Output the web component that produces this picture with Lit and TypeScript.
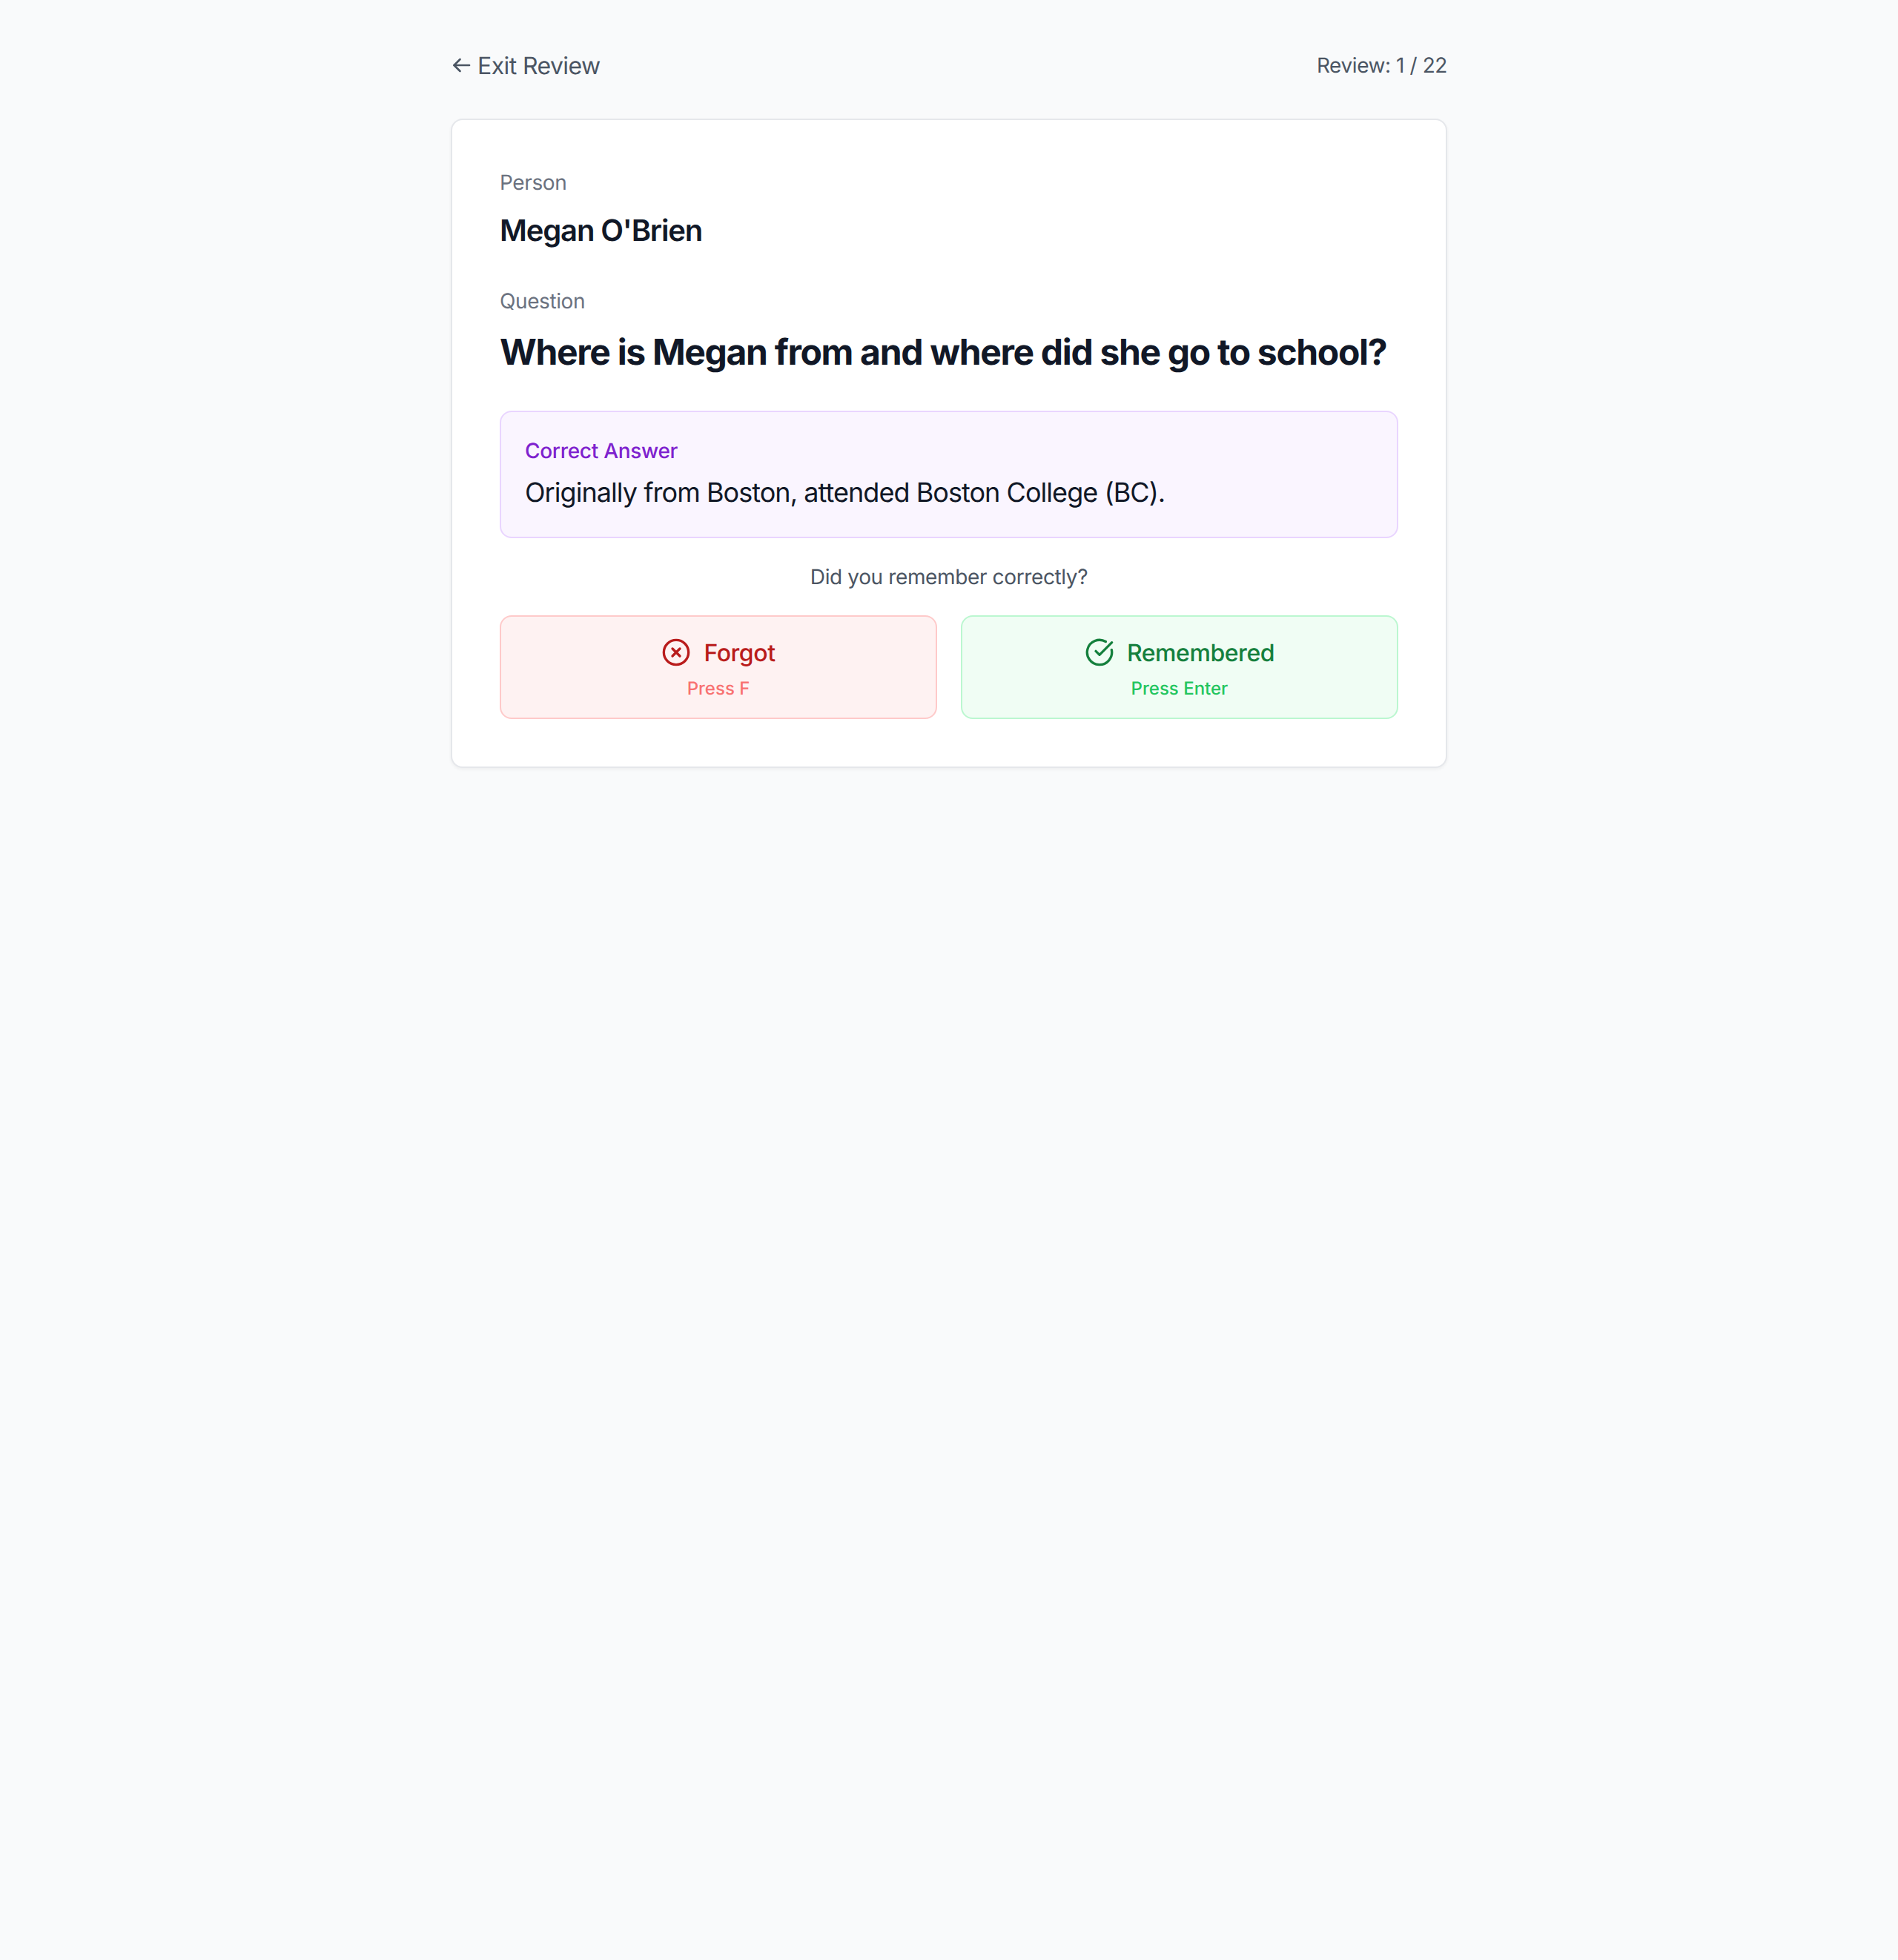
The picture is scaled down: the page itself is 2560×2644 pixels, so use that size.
import { LitElement, html, css } from "lit";
import { customElement } from "lit/decorators.js";

@customElement("app-root")
export class AppRoot extends LitElement {
  static styles = css`
    :host { display: block; min-height: 2644px; background: #f9fafb; font-family: Inter, "Liberation Sans", sans-serif; text-rendering: geometricPrecision; }
    .wrap { width: 1344px; margin: 0 auto; padding: 64px 0 0; }
    .top { display: flex; justify-content: space-between; align-items: center; margin-bottom: 48px; height: 48px; }
    .exit { display: flex; align-items: center; gap: 8px; color: #4b5563; font-size: 32px; line-height: 48px; letter-spacing: -0.6px; }
    .exit span { padding-top: 2px; }
    .exit svg { width: 28px; height: 28px; }
    .count { color: #4b5563; font-size: 28px; line-height: 40px; letter-spacing: -0.42px; }
    .card { box-sizing: border-box; background: #fff; border: 2px solid #e5e7eb; border-radius: 16px; padding: 64px; box-shadow: 0 2px 4px rgba(0,0,0,.05); }
    .label { color: #6b7280; font-size: 28px; line-height: 40px; letter-spacing: -0.4px; margin-bottom: 16px; }
    .person { color: #111827; font-size: 40px; line-height: 58px; font-weight: 600; letter-spacing: -1.15px; margin-bottom: 46px; }
    .q { color: #111827; font-size: 48px; line-height: 66px; font-weight: 700; letter-spacing: -1.33px; white-space: nowrap; }
    .answer { background: #faf5ff; border: 2px solid #e9d5ff; border-radius: 16px; padding: 32px; margin-top: 46px; }
    .answer .t { color: #7e22ce; font-size: 28px; line-height: 40px; font-weight: 500; letter-spacing: -0.3px; margin-bottom: 8px; }
    .answer .a { color: #111827; font-size: 36px; line-height: 56px; letter-spacing: -0.95px; }
    .ask { text-align: center; color: #4b5563; font-size: 28px; line-height: 40px; letter-spacing: -0.37px; margin: 32px 0; }
    .btns { display: grid; grid-template-columns: 1fr 1fr; gap: 32px; }
    .btn { border-radius: 16px; padding: 24px 32px 22px; display: flex; flex-direction: column; align-items: center; gap: 6px; border: 2px solid; }
    .main { display: flex; align-items: flex-start; gap: 17px; font-size: 32px; line-height: 50px; font-weight: 500; letter-spacing: -0.45px; }
    .main svg { width: 40px; height: 40px; margin-top: 4px; }
    .sub { font-size: 24px; line-height: 34px; font-weight: 500; }
    .f { background: #fef2f2; border-color: #fecaca; }
    .f .main { color: #b91c1c; } .f .sub { color: #f87171; }
    .r { background: #f0fdf4; border-color: #bbf7d0; }
    .r .main { color: #15803d; } .r .sub { color: #22c55e; }
  `;
  render() {
    return html`<div class="wrap">
      <div class="top">
        <div class="exit"><svg viewBox="0 0 28 28" fill="none" stroke="currentColor" stroke-width="2.7" stroke-linecap="round" stroke-linejoin="round"><path d="M25 14H4.5"/><path d="M12.5 6l-8 8 8 8"/></svg><span>Exit Review</span></div>
        <div class="count">Review: 1 / 22</div>
      </div>
      <div class="card">
        <div class="label">Person</div>
        <div class="person">Megan O'Brien</div>
        <div class="label">Question</div>
        <div class="q">Where is Megan from and where did she go to school?</div>
        <div class="answer"><div class="t">Correct Answer</div><div class="a">Originally from Boston, attended Boston College (BC).</div></div>
        <div class="ask">Did you remember correctly?</div>
        <div class="btns">
          <div class="btn f"><div class="main"><svg viewBox="0 0 24 24" fill="none" stroke="currentColor" stroke-width="2" stroke-linecap="round" stroke-linejoin="round"><circle cx="12" cy="12" r="10"/><path d="M15 9l-6 6M9 9l6 6"/></svg>Forgot</div><div class="sub">Press F</div></div>
          <div class="btn r"><div class="main"><svg viewBox="0 0 24 24" fill="none" stroke="currentColor" stroke-width="2" stroke-linecap="round" stroke-linejoin="round"><path d="M21.801 10A10 10 0 1 1 17 3.335"/><path d="M9 11l3 3L22 4"/></svg>Remembered</div><div class="sub">Press Enter</div></div>
        </div>
      </div>
    </div>`;
  }
}
